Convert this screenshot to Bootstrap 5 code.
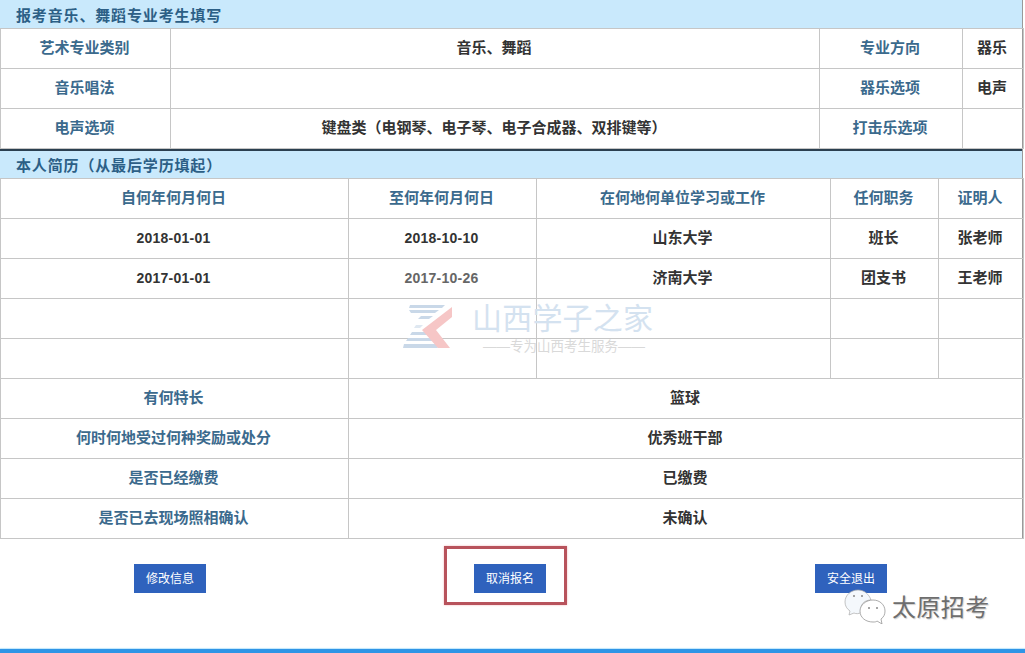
<!DOCTYPE html>
<html lang="zh-CN">
<head>
<meta charset="utf-8">
<title>报名信息</title>
<link rel="stylesheet" href="https://cdn.jsdelivr.net/npm/bootstrap@5.3.0/dist/css/bootstrap.min.css">
<style>
html,body{height:100%;overflow:hidden}
body{font-family:"Liberation Sans","Noto Sans CJK SC",sans-serif;background:#fff;font-size:15px}
.sheet{position:relative;width:1025px;height:653px;display:flex;flex-direction:column;overflow:hidden}
.form-wrap{width:1023px;border-right:1px solid #9a9a9a}
.band{height:28px;background:#c9e9fc;color:#2c5f86;font-weight:700;font-size:15px;letter-spacing:.85px;line-height:31px;padding-left:16px}
.band-second{height:29px;border-top:2px solid #2b3f50;line-height:29px}
.grid-tb{table-layout:fixed;width:1023px;margin:0;border-collapse:collapse;--bs-table-border-color:#c6c6c6}
.grid-tb td{height:40px;padding:0 2px 1px 0;text-align:center;vertical-align:middle;font-size:15px;font-weight:700;color:#333;border:1px solid #c6c6c6;line-height:36px}
.grid-tb tr:first-child td{border-top:1px solid #c6c6c6}
.grid-tb td.lab{color:#3b6a8d}
.grid-tb td.num{font-size:14px;letter-spacing:.25px;color:#333}
.grid-tb td.num-dim{color:#666}
.act-btn{background:#2f62bd;color:#fff;border:0;border-radius:0;width:72px;height:29px;font-size:12px;line-height:27px;padding:2px 0 0;font-weight:400}
.act-btn:hover{background:#2f62bd;color:#fff}
.act-row{display:flex;height:110px}
.act-cell{position:relative;padding-top:25px}
.act-a{width:340px;padding-left:134px}
.act-b{width:341px;padding-left:134px}
.act-c{padding-left:134px}
.red-box{position:absolute;left:104px;top:7px;width:123px;height:59px;border:3px solid #b8535c;box-shadow:0 0 2px #f3b7bb}
.foot-bar{height:4px;background:#2f95e6;box-shadow:0 -1px 1px #bfe6fb;margin-top:auto}
.wm-logo{position:absolute;left:403px;top:304px;width:50px;height:45px}
.wm-title{position:absolute;left:472px;top:298px;font-size:30px;line-height:42px;color:#d4e2f0;font-weight:400;letter-spacing:.2px}
.wm-sub{position:absolute;left:483px;top:338px;font-size:13.5px;line-height:18px;color:#d9d9d9;white-space:nowrap}
.wx-logo{position:absolute;left:844px;top:588px;width:42px;height:36px}
.wx-name{position:absolute;left:892px;top:590px;font-size:24px;line-height:36px;color:#6e6e6e;text-shadow:1px 1px 1px #cfcfcf;letter-spacing:.4px}
</style>
</head>
<body>
<div class="sheet">
  <div class="form-wrap">
    <div class="band">报考音乐、舞蹈专业考生填写</div>
    <table class="table table-bordered grid-tb">
      <colgroup><col style="width:170px"><col style="width:649px"><col style="width:143px"><col style="width:61px"></colgroup>
      <tbody>
        <tr><td class="lab">艺术专业类别</td><td>音乐、舞蹈</td><td class="lab">专业方向</td><td>器乐</td></tr>
        <tr><td class="lab">音乐唱法</td><td></td><td class="lab">器乐选项</td><td>电声</td></tr>
        <tr><td class="lab">电声选项</td><td>键盘类（电钢琴、电子琴、电子合成器、双排键等）</td><td class="lab">打击乐选项</td><td></td></tr>
      </tbody>
    </table>
    <div class="band band-second">本人简历（从最后学历填起）</div>
    <table class="table table-bordered grid-tb">
      <colgroup><col style="width:348px"><col style="width:188px"><col style="width:294px"><col style="width:108px"><col style="width:85px"></colgroup>
      <tbody>
        <tr><td class="lab">自何年何月何日</td><td class="lab">至何年何月何日</td><td class="lab">在何地何单位学习或工作</td><td class="lab">任何职务</td><td class="lab">证明人</td></tr>
        <tr><td class="num">2018-01-01</td><td class="num">2018-10-10</td><td>山东大学</td><td>班长</td><td>张老师</td></tr>
        <tr><td class="num">2017-01-01</td><td class="num num-dim">2017-10-26</td><td>济南大学</td><td>团支书</td><td>王老师</td></tr>
        <tr><td></td><td></td><td></td><td></td><td></td></tr>
        <tr><td></td><td></td><td></td><td></td><td></td></tr>
        <tr><td class="lab">有何特长</td><td colspan="4">篮球</td></tr>
        <tr><td class="lab">何时何地受过何种奖励或处分</td><td colspan="4">优秀班干部</td></tr>
        <tr><td class="lab">是否已经缴费</td><td colspan="4">已缴费</td></tr>
        <tr><td class="lab">是否已去现场照相确认</td><td colspan="4">未确认</td></tr>
      </tbody>
    </table>
  </div>
  <div class="act-row">
    <div class="act-cell act-a"><button type="button" class="btn act-btn">修改信息</button></div>
    <div class="act-cell act-b"><button type="button" class="btn act-btn">取消报名</button><span class="red-box"></span></div>
    <div class="act-cell act-c"><button type="button" class="btn act-btn">安全退出</button></div>
  </div>
  <div class="foot-bar"></div>

  <svg class="wm-logo" viewBox="0 0 50 45" aria-hidden="true">
    <g fill="#c9d8e8">
      <path d="M7 1H42L39 4H6Z"/>
      <path d="M6 6H36L32 9H8Z"/>
      <path d="M18 12H30L26 15H15Z"/>
      <path d="M13 21H20L17 24H11Z" opacity=".6"/>
      <path d="M9 28H26L28 31H7Z"/>
      <path d="M5 34H30L32 37H3Z"/>
      <path d="M1 40H33L35 44H0Z"/>
    </g>
    <path d="M49 3L19 26L35 44H47L33 26L49 13Z" fill="#f6c6c6"/>
  </svg>
  <div class="wm-title">山西学子之家</div>
  <div class="wm-sub">——专为山西考生服务——</div>

  <svg class="wx-logo" viewBox="0 0 42 36" aria-hidden="true">
    <path d="M18 24C15 17 20 12 27 12C25 6 20 2 14 2C7 2 1 7 1 14C1 18 3 21 6 23L5 27L10 25C12 26 15 26 18 24Z" fill="#f4f8fc" stroke="#aaa" stroke-width=".7"/>
    <path d="M29 12C22 12 16 17 16 23C16 30 22 34 29 34C31 34 32 34 33 33L38 36L37 31C40 29 41 26 41 23C41 17 36 12 29 12Z" fill="#fff" stroke="#888" stroke-width=".7"/>
    <circle cx="10" cy="8" r="1" fill="#888"/><circle cx="18" cy="8" r="1" fill="#888"/>
    <circle cx="25" cy="20" r="1" fill="#888"/><circle cx="33" cy="20" r="1" fill="#888"/>
  </svg>
  <div class="wx-name">太原招考</div>
</div>
<script src="https://cdn.jsdelivr.net/npm/bootstrap@5.3.0/dist/js/bootstrap.bundle.min.js"></script>
</body>
</html>
